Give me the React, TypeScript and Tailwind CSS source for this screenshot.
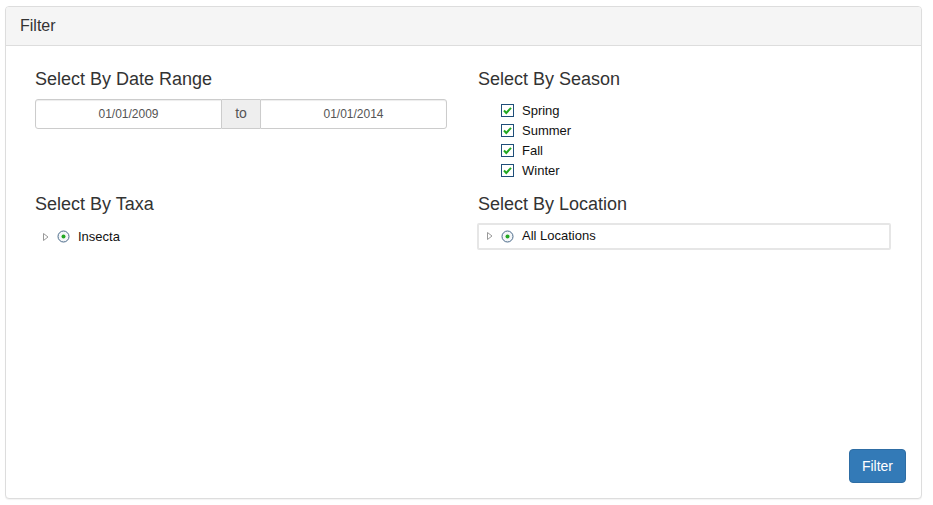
export default function App() {
  return (
    <div className="min-h-[505px] bg-white pt-[6px] pl-[5px] font-['Liberation_Sans',Arial,sans-serif] text-[14px] text-[#333]">
      <div className="flex h-[493px] w-[917px] flex-col rounded-[4px] border border-[#ddd] bg-white shadow-[0_1px_1px_rgba(0,0,0,0.05)]">
        <div className="rounded-t-[3px] border-b border-[#ddd] bg-[#f5f5f5] px-[14px] py-[10px]">
          <h3 className="text-[16px] leading-[17.6px] text-[#333]">Filter</h3>
        </div>

        <div className="flex flex-1 flex-col py-[15px] pr-[15px] pl-[14px]">
          <div className="flex">
            <Section title="Select By Date Range">
              <div className="flex h-[30px] w-[412px]">
                <input
                  readOnly
                  value="01/01/2009"
                  className="h-full w-[187px] rounded-l-[3px] border border-[#ccc] bg-white text-center text-[12px] text-[#555] shadow-[inset_0_1px_1px_rgba(0,0,0,0.075)] outline-none"
                />
                <span className="flex h-full w-[38px] items-center justify-center border-y border-[#ccc] bg-[#eee] text-[14px] text-[#555]">
                  to
                </span>
                <input
                  readOnly
                  value="01/01/2014"
                  className="h-full w-[187px] rounded-r-[3px] border border-[#ccc] bg-white text-center text-[12px] text-[#555] shadow-[inset_0_1px_1px_rgba(0,0,0,0.075)] outline-none"
                />
              </div>
            </Section>
            <Section title="Select By Season">
              <ul className="pt-[2px] pl-[23px]">
                {["Spring", "Summer", "Fall", "Winter"].map((s) => (
                  <li key={s} className="flex h-[20px] items-center gap-[8px] text-[13px] text-[#111]">
                    <CheckBox />
                    {s}
                  </li>
                ))}
              </ul>
            </Section>
          </div>

          <div className="mt-[5px] flex">
            <Section title="Select By Taxa">
              <div className="flex h-[26px] items-center pl-[8px]">
                <TreeItem label="Insecta" />
              </div>
            </Section>
            <Section title="Select By Location">
              <div className="-mt-[1px] -ml-[1px] flex h-[27px] w-[414px] items-center rounded-[2px] border-2 border-[#e6e6e6] pl-[8px]">
                <TreeItem label="All Locations" />
              </div>
            </Section>
          </div>

          <div className="mt-auto flex justify-end">
            <button className="h-[34px] rounded-[4px] border border-[#2e6da4] bg-[#337ab7] px-[12px] text-[14px] text-white">
              Filter
            </button>
          </div>
        </div>
      </div>
    </div>
  );
}

function Section({ title, children }: { title: string; children: React.ReactNode }) {
  return (
    <div className="w-[443px] px-[15px]">
      <h4 className="mt-[8px] mb-[10px] text-[18px] leading-[20px] text-[#333]">{title}</h4>
      {children}
    </div>
  );
}

function CheckBox() {
  return (
    <svg width="13" height="13" viewBox="0 0 13 13">
      <rect x="0.5" y="0.5" width="12" height="12" fill="#fff" stroke="#1f4e79" />
      <path d="M3 6.5 L5.3 9 L10 3.8" fill="none" stroke="#22a822" strokeWidth="2" />
    </svg>
  );
}

function TreeItem({ label }: { label: string }) {
  return (
    <div className="flex items-center text-[13px] text-[#111]">
      <svg width="6" height="8" viewBox="0 0 6 8" className="mr-[8px]">
        <path d="M0.5 0.5 L5 4 L0.5 7.5 Z" fill="#fff" stroke="#999" />
      </svg>
      <svg width="13" height="13" viewBox="0 0 13 13" className="mr-[8px]">
        <circle cx="6.5" cy="6.5" r="5.5" fill="#f4f6f8" stroke="#4a6a8a" />
        <circle cx="6.5" cy="6.5" r="2" fill="#22a822" />
      </svg>
      {label}
    </div>
  );
}
